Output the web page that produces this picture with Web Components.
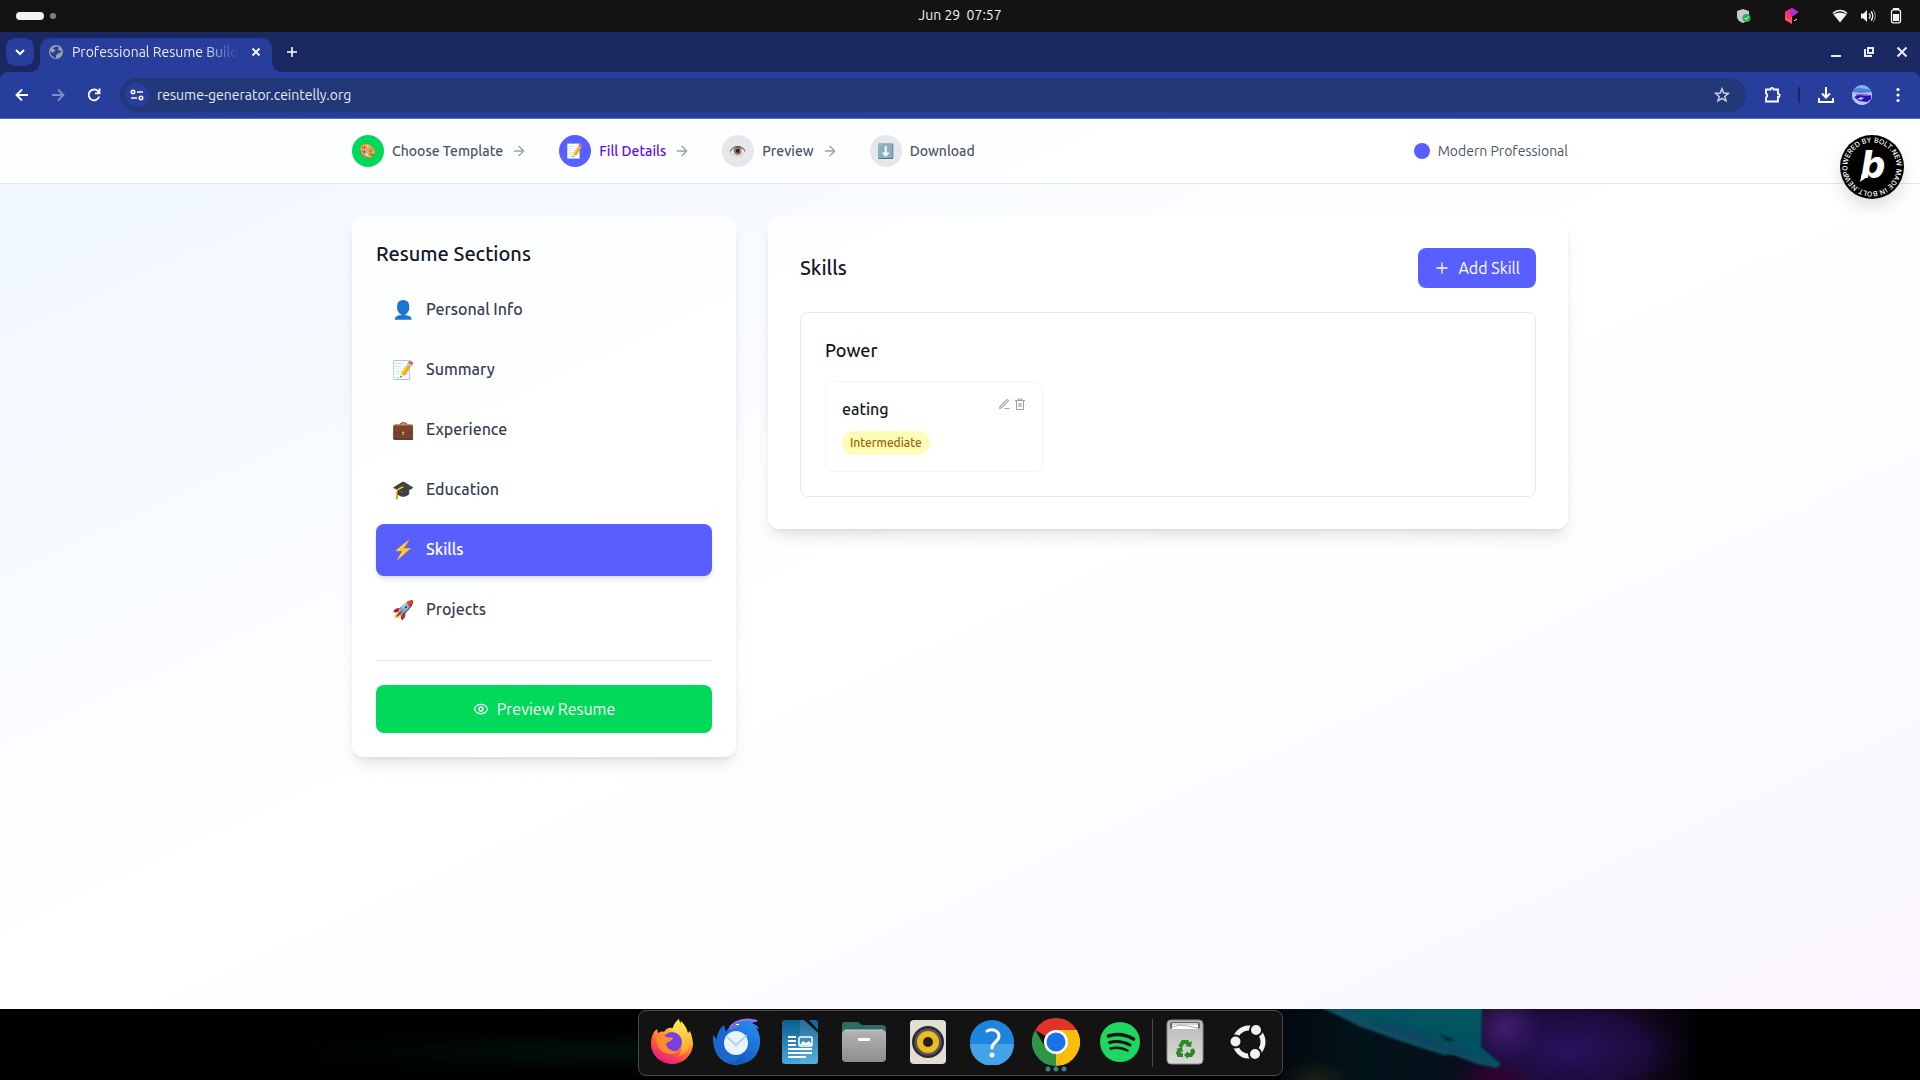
<!DOCTYPE html>
<html lang="en">
  <head>
    <meta charset="utf-8">
    <title>Professional Resume Builder</title>
    <style type="text/css">
      html {
        font-family: Ubuntu, "Noto Sans", "Noto Color Emoji", sans-serif;
        font-size: 16px;
        line-height: 24px;
      }

      body {
        display: flex;
        flex-direction: column;
        margin: 0;
        min-height: 100vh;
        background: #000;
      }

      resume-page {
        flex: 1 1 auto;
      }
    </style>
  </head>
  <body>
    <system-bar></system-bar>
    <browser-tabs></browser-tabs>
    <browser-toolbar></browser-toolbar>

    <resume-page>
      <resume-step slot="steps" class="done" icon="🎨">Choose Template</resume-step>
      <resume-step slot="steps" class="current" icon="📝">Fill Details</resume-step>
      <resume-step slot="steps" icon="👁️">Preview</resume-step>
      <resume-step slot="steps" class="last" icon="⬇️">Download</resume-step>

      <section-list slot="sidebar">
        <section-item icon="👤">Personal Info</section-item>
        <section-item icon="📝">Summary</section-item>
        <section-item icon="💼">Experience</section-item>
        <section-item icon="🎓">Education</section-item>
        <section-item icon="⚡" class="active">Skills</section-item>
        <section-item icon="🚀">Projects</section-item>
      </section-list>

      <skills-panel>
        <skill-group>
          <span slot="title">Power</span>
          <skill-card level="Intermediate">eating</skill-card>
        </skill-group>
      </skills-panel>
    </resume-page>

    <app-dock></app-dock>

    <script>
      class BaseElement extends HTMLElement {
        constructor() {
          super()

          this.attachShadow({ mode: 'open' })
          this.shadowRoot.innerHTML = `
            <style>
              *, :host { box-sizing: border-box; }
              button { border: 0; padding: 0; background: none; color: inherit; font: inherit; }
              h2, h3, h4 { margin: 0; font-weight: 500; }
              svg { display: block; flex: none; }
            </style>
          ` + this.render()
        }

        attr(name) {
          return this.getAttribute(name) || ''
        }
      }

      customElements.define('system-bar', class extends BaseElement {
        render() {
          return `
            <style>
              :host {
                display: grid;
                grid-template-columns: 1fr auto 1fr;
                align-items: center;
                height: 32px;
                padding: 0 16px;
                background: #131313;
                color: #f2f2f2;
                font-size: 14px;
              }
              .spaces { display: flex; align-items: center; gap: 6px; }
              .spaces i { width: 6px; height: 6px; border-radius: 3px; background: #808080; }
              .spaces i:first-child { width: 28px; height: 8px; border-radius: 4px; background: #f2f2f2; }
              .clock { white-space: pre; line-height: 30px; align-self: start; }
              .tray { display: flex; justify-content: flex-end; align-items: center; gap: 12px; }
              .tray .app { margin-right: 20px; }
            </style>
            <div class="spaces"><i></i><i></i></div>
            <time class="clock">Jun 29  07:57</time>
            <div class="tray">
              <svg class="app" width="16" height="16" viewBox="0 0 16 16">
                <path fill="#c8c8c8" d="M7 1l6 2v5c0 4-3 6-6 7-3-1-6-3-6-7V3z"/>
                <circle cx="10.500" cy="10" r="4" fill="#2bb04a"/>
                <path fill="none" stroke="#fff" d="M8.500 10l1.500 1.500 2.500-3"/>
              </svg>
              <svg class="app" width="16" height="16" viewBox="0 0 16 16">
                <path fill="#ff5a3c" d="M1 4l7-4v16l-7-4z"/>
                <path fill="#ff2f7e" d="M1 4l7-4 2 4-5 8-4-4z"/>
                <path fill="#b22be0" d="M8 0l7 4-7 5-3-4z"/>
                <path fill="#000" d="M15 4v8l-7 4V9z"/>
                <path stroke="#fff" d="M10 13l3-2"/>
              </svg>
              <svg width="16" height="16" viewBox="0 0 16 16">
                <path fill="none" stroke="#f2f2f2" stroke-width="1.500" d="M1 5.500C5 1.500 11 1.500 15 5.500"/>
                <path fill="#f2f2f2" d="M1.500 6.500C5 4 11 4 14.500 6.500L8 14.500z"/>
              </svg>
              <svg width="16" height="16" viewBox="0 0 16 16" fill="none" stroke="#f2f2f2">
                <path fill="#f2f2f2" stroke="none" d="M1 5.500h2.500L7 2v12l-3.500-3.500H1z"/>
                <path stroke-width="1.400" d="M9 5.500c1.300 1.300 1.300 3.700 0 5"/>
                <path stroke-width="1.400" d="M11 3.500c2.300 2.300 2.300 6.700 0 9"/>
                <path stroke="#999" d="M13 2c3 3 3 9 0 12"/>
              </svg>
              <svg width="16" height="16" viewBox="0 0 16 16">
                <path fill="#f2f2f2" d="M5 0h6v2H5zM5 6h6v7H5z"/>
                <rect x="3.500" y="1.800" width="9" height="13" rx="2" fill="none" stroke="#f2f2f2" stroke-width="1.300"/>
              </svg>
            </div>
          `
        }
      })

      customElements.define('browser-tabs', class extends BaseElement {
        render() {
          return `
            <style>
              :host {
                display: flex;
                align-items: flex-end;
                height: 40px;
                padding: 0 4px 0 6px;
                background: #1a2962;
                color: #e8ebf7;
                font-size: 14px;
              }
              button { display: grid; place-items: center; width: 28px; height: 28px; }
              .search { align-self: center; border-radius: 9px; background: #283e9c; margin-right: 6px; }
              .tab {
                position: relative;
                display: flex;
                align-items: center;
                width: 232px;
                height: 34px;
                padding: 0 2px 6px 8px;
                border-radius: 10px 10px 0 0;
                background: #283e9c;
              }
              /* flared feet that join the tab to the toolbar */
              .tab::before, .tab::after {
                content: "";
                position: absolute;
                bottom: 0;
                width: 10px;
                height: 10px;
              }
              .tab::before { right: 100%; background: radial-gradient(circle at 0 0, transparent 10px, #283e9c 10px); }
              .tab::after { left: 100%; background: radial-gradient(circle at 100% 0, transparent 10px, #283e9c 10px); }
              .title {
                flex: 1;
                margin-left: 8px;
                overflow: hidden;
                white-space: nowrap;
                -webkit-mask: linear-gradient(to right, #000 132px, transparent 166px);
                mask: linear-gradient(to right, #000 132px, transparent 166px);
              }
              .new, .window { margin-bottom: 6px; }
              .new { margin-left: 6px; }
              .window { display: flex; gap: 5px; margin-left: auto; }
            </style>
            <button class="search" aria-label="Search tabs">
              <svg width="12" height="12" viewBox="0 0 12 12" fill="none" stroke="#fff" stroke-width="2"><path d="M2 4l4 4 4-4"/></svg>
            </button>
            <div class="tab">
              <svg width="16" height="16" viewBox="0 0 16 16">
                <circle cx="8" cy="8" r="7" fill="#9aa0a6"/>
                <path fill="#283e9c" d="M8 2.500c-1 1-3 .5-3 2.500 2 0 3 1 2 2-1 .5-2 1-2 2L2 7c0 4 3 6.500 6 7v-3c2 0 1-2 3-2 1 0 2-1 2.500-2-2 0-2-1-4-1 0-1 2-1 1-3z"/>
              </svg>
              <span class="title">Professional Resume Builder</span>
              <button aria-label="Close tab">
                <svg width="10" height="10" viewBox="0 0 10 10" stroke="#fff" stroke-width="1.800"><path d="M1.500 1.500l7 7M8.500 1.500l-7 7"/></svg>
              </button>
            </div>
            <button class="new" aria-label="New tab">
              <svg width="12" height="12" viewBox="0 0 12 12" stroke="#fff" stroke-width="1.600"><path d="M6 1v10M1 6h10"/></svg>
            </button>
            <div class="window">
              <button aria-label="Minimise">
                <svg width="12" height="12" viewBox="0 0 12 12" fill="#e8ebf7"><path d="M1 9h10v2H1z"/></svg>
              </button>
              <button aria-label="Restore">
                <svg width="12" height="12" viewBox="0 0 12 12" fill="none" stroke="#e8ebf7" stroke-width="2"><path d="M5 2h5v5H5zM2 3v7h7"/></svg>
              </button>
              <button aria-label="Close">
                <svg width="12" height="12" viewBox="0 0 12 12" stroke="#e8ebf7" stroke-width="2"><path d="M1.500 1.500l9 9M10.500 1.500l-9 9"/></svg>
              </button>
            </div>
          `
        }
      })

      customElements.define('browser-toolbar', class extends BaseElement {
        render() {
          return `
            <style>
              :host {
                display: block;
                background: #1a2962;
                font-size: 14px;
              }
              .bar {
                display: flex;
                align-items: center;
                height: 47px;
                padding: 0 8px;
                border-bottom: 1px solid #5272c4;
                border-radius: 8px 8px 0 0;
                background: #283e9c;
              }
              button { display: grid; place-items: center; width: 28px; height: 28px; }
              .nav { display: flex; gap: 8px; margin-right: 12px; }
              .address {
                flex: 1;
                display: flex;
                align-items: center;
                height: 34px;
                padding: 0 10px 0 5px;
                border-radius: 17px;
                background: #223878;
              }
              .site { width: 24px; height: 24px; border-radius: 12px; background: #283e9c; }
              input {
                flex: 1;
                margin: 0 8px;
                padding: 0;
                border: 0;
                outline: 0;
                background: none;
                color: #e8ebf7;
                font: inherit;
              }
              .ext { margin: 0 11px 0 13px; }
              .sep { width: 2px; height: 16px; margin-right: 12px; background: #1a2962; }
              .menu { margin-left: 8px; }
              .user { margin-left: 8px; }
            </style>
            <div class="bar">
              <div class="nav">
                <button aria-label="Back"><svg width="14" height="14" viewBox="0 0 14 14" fill="none" stroke="#fff" stroke-width="1.800"><path d="M13 7H2M7 1.500L1.500 7 7 12.500"/></svg></button>
                <button aria-label="Forward"><svg width="14" height="14" viewBox="0 0 14 14" fill="none" stroke="#7f8fca" stroke-width="1.800"><path d="M1 7h11M7 1.500L12.500 7 7 12.500"/></svg></button>
                <button aria-label="Reload"><svg width="14" height="14" viewBox="0 0 14 14" fill="none" stroke="#fff" stroke-width="1.800"><path d="M12.200 8.500A5.400 5.400 0 1 1 11 3.200L12.500 5M12.500 .5V5.300H8"/></svg></button>
              </div>
              <div class="address">
                <button class="site" aria-label="Site information">
                  <svg width="14" height="14" viewBox="0 0 14 14" fill="none" stroke="#fff" stroke-width="1.600"><circle cx="3" cy="4" r="1.700"/><path d="M7 4h6M1 10h6"/><circle cx="11" cy="10" r="1.700"/></svg>
                </button>
                <input type="text" aria-label="Address" value="resume-generator.ceintelly.org">
                <button aria-label="Bookmark">
                  <svg width="16" height="16" viewBox="0 0 16 16" fill="none" stroke="#c9cfe0" stroke-width="1.500"><path d="M8 1.800l1.700 4.300 4.700.3-3.600 3 1.200 4.500L8 11.400l-4 2.500 1.200-4.500-3.600-3 4.700-.3z"/></svg>
                </button>
              </div>
              <button class="ext" aria-label="Extensions">
                <svg width="18" height="18" viewBox="0 0 18 18" fill="none" stroke="#fff" stroke-width="1.800"><path d="M2 3.500h4.500a1.600 1.600 0 0 1 3.200 0H14v4.300a1.600 1.600 0 0 1 0 3.200v4.500H2v-4a2.200 2.200 0 0 0 0-4z"/></svg>
              </button>
              <span class="sep"></span>
              <button aria-label="Downloads">
                <svg width="18" height="18" viewBox="0 0 18 18" fill="none" stroke="#fff" stroke-width="2"><path d="M9 1v10M5 7.500l4 4 4-4M2 12v4h14v-4"/></svg>
              </button>
              <button class="user" aria-label="Profile">
                <svg width="20" height="20" viewBox="0 0 20 20">
                  <clipPath id="round"><circle cx="10" cy="10" r="10"/></clipPath>
                  <g clip-path="url(#round)">
                    <path fill="#7db8f0" d="M0 0h20v20H0z"/>
                    <path fill="#4f7ee0" d="M0 4l8-1 12 2v3H0z"/>
                    <path fill="#c8b8f0" d="M0 7l9 1 11-1v4H0z"/>
                    <path fill="#b9c4f4" d="M0 10h20v10H0z"/>
                    <path fill="#7f6fe0" d="M4 9h12v2H4z"/>
                    <path fill="#2b12b8" d="M2 12l5-2 7 1 5-1v4l-4 3-8-1z"/>
                    <path fill="#b9c4f4" d="M5 14l4-2 3 1-3 2z"/>
                  </g>
                </svg>
              </button>
              <button class="menu" aria-label="Menu">
                <svg width="4" height="16" viewBox="0 0 4 16" fill="#fff"><circle cx="2" cy="2.500" r="1.600"/><circle cx="2" cy="8" r="1.600"/><circle cx="2" cy="13.500" r="1.600"/></svg>
              </button>
            </div>
          `
        }
      })

      customElements.define('resume-page', class extends BaseElement {
        render() {
          return `
            <style>
              :host {
                position: relative;
                display: block;
                background: linear-gradient(to bottom right, #eff6ff, #fff, #faf5ff);
              }
              header {
                background: rgba(255, 255, 255, .8);
                border-bottom: 1px solid #e5e7eb;
              }
              .wrap {
                max-width: 1280px;
                margin: 0 auto;
                padding: 0 32px;
              }
              header .wrap {
                display: flex;
                align-items: center;
                justify-content: space-between;
                height: 64px;
              }
              nav { display: flex; gap: 32px; }
              .template {
                display: flex;
                align-items: center;
                gap: 8px;
                color: #4a5565;
                font-size: 14px;
                line-height: 20px;
              }
              .template i { width: 16px; height: 16px; border-radius: 8px; background: #595fff; }
              .columns {
                display: grid;
                grid-template-columns: repeat(3, 1fr);
                gap: 32px;
                align-items: start;
                padding-top: 32px;
                padding-bottom: 32px;
              }
              .content { grid-column: span 2; }
              bolt-badge { position: absolute; top: 16px; right: 16px; }
            </style>
            <header>
              <div class="wrap">
                <nav><slot name="steps"></slot></nav>
                <div class="template"><i></i>Modern Professional</div>
              </div>
            </header>
            <div class="wrap columns">
              <slot name="sidebar"></slot>
              <div class="content"><slot></slot></div>
            </div>
            <bolt-badge></bolt-badge>
          `
        }
      })

      customElements.define('resume-step', class extends BaseElement {
        render() {
          return `
            <style>
              :host {
                display: flex;
                align-items: center;
                gap: 8px;
                color: #4a5565;
                font-size: 14px;
                font-weight: 500;
                line-height: 20px;
              }
              :host(.current) { color: #5a0df5; }
              .dot {
                display: grid;
                place-items: center;
                width: 32px;
                height: 32px;
                border-radius: 16px;
                background: #e5e7eb;
              }
              :host(.done) .dot { background: #00d95a; }
              :host(.current) .dot { background: #595fff; }
              :host(.last) svg { display: none; }
            </style>
            <span class="dot">${this.attr('icon')}</span>
            <slot></slot>
            <svg width="16" height="16" viewBox="0 0 24 24" fill="none" stroke="#99a1af" stroke-width="2" stroke-linecap="round" stroke-linejoin="round"><path d="M5 12h14M12 5l7 7-7 7"/></svg>
          `
        }
      })

      customElements.define('section-list', class extends BaseElement {
        render() {
          return `
            <style>
              :host {
                display: block;
                padding: 24px;
                border-radius: 12px;
                background: rgba(255, 255, 255, .8);
                box-shadow: 0 10px 15px -3px rgba(0, 0, 0, .1), 0 4px 6px -4px rgba(0, 0, 0, .1);
              }
              h2 { margin-bottom: 16px; color: #101828; font-size: 20px; font-weight: 550; line-height: 28px; }
              nav { display: grid; gap: 8px; }
              footer { margin-top: 24px; padding-top: 24px; border-top: 1px solid #e5e7eb; }
              button {
                display: flex;
                align-items: center;
                justify-content: center;
                gap: 8px;
                width: 100%;
                height: 48px;
                border-radius: 8px;
                background: #00d95a;
                color: #fff;
              }
            </style>
            <h2>Resume Sections</h2>
            <nav><slot></slot></nav>
            <footer>
              <button>
                <svg width="16" height="16" viewBox="0 0 16 16" fill="none" stroke="#fff" stroke-width="1.300"><path d="M1.300 8c2.500-6.300 10.900-6.300 13.400 0-2.500 6.300-10.900 6.300-13.400 0z"/><circle cx="8" cy="8" r="2"/></svg>
                Preview Resume
              </button>
            </footer>
          `
        }
      })

      customElements.define('section-item', class extends BaseElement {
        render() {
          return `
            <style>
              :host { display: block; color: #364153; }
              button {
                display: flex;
                align-items: center;
                gap: 12px;
                width: 100%;
                padding: 11px 16px 13px;
                border-radius: 8px;
                text-align: left;
                font-weight: 500;
                line-height: 28px;
              }
              :host(.active) button {
                background: #595fff;
                color: #fff;
                box-shadow: 0 4px 6px -1px rgba(0, 0, 0, .1), 0 2px 4px -2px rgba(0, 0, 0, .1);
              }
              .icon { width: 22px; font-size: 18px; }
            </style>
            <button><span class="icon">${this.attr('icon')}</span><slot></slot></button>
          `
        }
      })

      customElements.define('skills-panel', class extends BaseElement {
        render() {
          return `
            <style>
              :host {
                display: block;
                padding: 32px;
                border-radius: 12px;
                background: rgba(255, 255, 255, .8);
                box-shadow: 0 10px 15px -3px rgba(0, 0, 0, .1), 0 4px 6px -4px rgba(0, 0, 0, .1);
              }
              header {
                display: flex;
                align-items: center;
                justify-content: space-between;
                margin-bottom: 24px;
              }
              h2 { color: #101828; font-size: 20px; font-weight: 550; line-height: 28px; }
              button {
                display: flex;
                align-items: center;
                gap: 8px;
                height: 40px;
                padding: 0 16px;
                border-radius: 8px;
                background: #595fff;
                color: #fff;
              }
            </style>
            <header>
              <h2>Skills</h2>
              <button>
                <svg width="16" height="16" viewBox="0 0 16 16" stroke="#fff" stroke-width="1.300"><path d="M8 2.500v11M2.500 8h11"/></svg>
                Add Skill
              </button>
            </header>
            <slot></slot>
          `
        }
      })

      customElements.define('skill-group', class extends BaseElement {
        render() {
          return `
            <style>
              :host {
                display: block;
                padding: 24px;
                border: 1px solid #e5e7eb;
                border-radius: 8px;
                background: #fff;
              }
              h3 { margin-bottom: 18px; color: #101828; font-size: 18px; font-weight: 550; line-height: 26px; }
              .cards { display: grid; grid-template-columns: repeat(3, 1fr); gap: 16px; }
            </style>
            <h3><slot name="title"></slot></h3>
            <div class="cards"><slot></slot></div>
          `
        }
      })

      customElements.define('skill-card', class extends BaseElement {
        render() {
          return `
            <style>
              :host {
                display: flex;
                justify-content: space-between;
                align-items: flex-start;
                padding: 16px;
                border: 1px solid #f3f4f6;
                border-radius: 8px;
              }
              h4 { margin-bottom: 11px; color: #101828; font-size: 16px; line-height: 22px; }
              .level {
                display: block;
                width: fit-content;
                padding: 4px 8px;
                border-radius: 12px;
                background: #fbfdb8;
                color: #a65f00;
                font-size: 12px;
                font-weight: 500;
                line-height: 16px;
              }
              .actions { display: flex; gap: 4px; color: #99a1af; }
            </style>
            <div>
              <h4><slot></slot></h4>
              <span class="level">${this.attr('level')}</span>
            </div>
            <div class="actions">
              <button aria-label="Edit">
                <svg width="12" height="12" viewBox="0 0 12 12" fill="none" stroke="currentColor"><path fill="#d4d7dd" d="M1.500 10.500l.7-2.500L8.500 1.700q1-.7 1.700 0t0 1.700L4 9.800z"/><path d="M6.500 10.500h5"/></svg>
              </button>
              <button aria-label="Delete">
                <svg width="12" height="12" viewBox="0 0 12 12" fill="none" stroke="currentColor"><path fill="#c3c7cf" stroke="none" d="M4 5h4v4H4z"/><path d="M1 2.500h10M4 2.500v-1.500h4v1.500M2.500 2.500v9h7v-9"/></svg>
              </button>
            </div>
          `
        }
      })

      customElements.define('bolt-badge', class extends BaseElement {
        render() {
          return `
            <style>
              :host {
                display: block;
                border-radius: 32px;
                box-shadow: 0 8px 16px rgba(0, 0, 0, .12);
              }
              text { fill: #fff; font-family: Inter, "Liberation Sans", sans-serif; }
              .ring { font-size: 7px; font-weight: 500; }
              .mark { font-size: 38px; font-weight: 800; font-style: italic; }
            </style>
            <a href="#" aria-label="Made in Bolt">
              <svg width="64" height="64" viewBox="0 0 64 64">
                <circle cx="32" cy="32" r="32" fill="#000"/>
                <path id="ring" fill="none" d="M8.800 40A24.500 24.500 0 1 1 55.200 24 24.500 24.500 0 1 1 8.800 40"/>
                <text class="ring"><textPath href="#ring">POWERED BY BOLT.NEW MADE IN BOLT.NEW</textPath></text>
                <text class="mark" x="33" y="43" text-anchor="middle">b</text>
                <path fill="#fff" d="M22 38l-2 9 7-5z"/>
              </svg>
            </a>
          `
        }
      })

      customElements.define('dock-app', class extends BaseElement {
        render() {
          return `
            <style>
              :host { display: block; }
              button { position: relative; display: grid; place-items: center; width: 64px; height: 64px; padding-bottom: 2px; }
              i { display: none; }
              :host(.running) i {
                position: absolute;
                bottom: 3px;
                left: 20px;
                display: block;
                width: 24px;
                height: 6px;
                background: radial-gradient(circle at 4px 3px, #348585 2px, transparent 3px) 0 0 / 8px 6px;
              }
            </style>
            <button aria-label="${this.attr('label')}"><slot></slot><i></i></button>
          `
        }
      })

      customElements.define('app-dock', class extends BaseElement {
        render() {
          return `
            <style>
              :host {
                position: relative;
                display: flex;
                justify-content: center;
                height: 71px;
                overflow: hidden;
                background: #000;
              }
              .wallpaper { position: absolute; right: 0; top: 0; }
              .glow { position: absolute; left: 0; top: 0; width: 50%; height: 100%; background: radial-gradient(ellipse at 65% 60%, #00100c, transparent 40%); }
              .dock {
                position: relative;
                display: flex;
                align-items: center;
                height: 66px;
                margin-top: 1px;
                padding: 0 1px;
                border: 1px solid #4a4a4a;
                border-radius: 8px;
                background: #131313;
              }
              .sep { width: 1px; height: 48px; background: #4a4a4a; }
            </style>
            <div class="glow"></div>
            <svg class="wallpaper" width="640" height="71" viewBox="0 0 640 71">
              <defs>
                <radialGradient id="violet"><stop offset="0" stop-color="#2a1260"/><stop offset=".6" stop-color="#1c0c44" stop-opacity=".8"/><stop offset="1" stop-color="#0a0418" stop-opacity="0"/></radialGradient>
                <radialGradient id="plum"><stop offset="0" stop-color="#421c70"/><stop offset="1" stop-color="#421c70" stop-opacity="0"/></radialGradient>
                <radialGradient id="wine"><stop offset="0" stop-color="#360030"/><stop offset="1" stop-color="#360030" stop-opacity="0"/></radialGradient>
                <radialGradient id="moss"><stop offset="0" stop-color="#1a2218"/><stop offset="1" stop-color="#1a2218" stop-opacity="0"/></radialGradient>
                <linearGradient id="base" x1="0" x2="1"><stop offset="0" stop-color="#05070f"/><stop offset=".12" stop-color="#02131a"/><stop offset=".3" stop-color="#07101a"/><stop offset=".34" stop-color="#1c0c2c"/><stop offset=".55" stop-color="#160818"/><stop offset=".65" stop-color="#010104"/><stop offset="1" stop-color="#000"/></linearGradient>
                <linearGradient id="teal" x1="0" x2="1" y1="1" y2="0"><stop offset="0" stop-color="#0a4560"/><stop offset="1" stop-color="#045a62"/></linearGradient>
                <filter id="edge"><feGaussianBlur stdDeviation="1"/></filter>
              </defs>
              <path fill="url(#base)" d="M0 0h640v71H0z"/>
              <ellipse cx="290" cy="40" rx="130" ry="60" fill="url(#violet)"/>
              <ellipse cx="225" cy="18" rx="38" ry="34" fill="url(#plum)"/>
              <ellipse cx="215" cy="74" rx="44" ry="26" fill="url(#wine)"/>
              <ellipse cx="36" cy="71" rx="36" ry="20" fill="url(#moss)"/>
              <g filter="url(#edge)">
                <path fill="url(#teal)" d="M36-4h166l-1 42 20 17-4 4-20-4-24-9-10 0-46-15-38-14z"/>
                <path fill="#0a3c66" opacity=".6" d="M84 12l40 6 44 20 40 12-40-8-46-16z"/>
                <path fill="#02282e" d="M158 24l18 7-8 2z"/>
              </g>
            </svg>
            <div class="dock">
              <dock-app label="Firefox">
                <svg width="44" height="46" viewBox="0 0 44 46">
                  <defs>
                    <linearGradient id="fx" x1=".8" y1="0" x2=".3" y2="1"><stop offset="0" stop-color="#fff04a"/><stop offset=".35" stop-color="#ffb52e"/><stop offset=".65" stop-color="#ff5a3c"/><stop offset="1" stop-color="#e5158a"/></linearGradient>
                    <linearGradient id="fy" x1="0" y1="0" x2="0" y2="1"><stop offset="0" stop-color="#fff14f"/><stop offset="1" stop-color="#ff9a2e"/></linearGradient>
                  </defs>
                  <path fill="url(#fx)" d="M1 25C1 17 4 12 7 10l1 4c2-1 4-2 6-1 3-5 10-6 13 0l4-11c4 4 6 8 7 12l2-2c2 5 3 10 3 14-1 11-10 19-21 19S1 36 1 25z"/>
                  <path fill="url(#fy)" d="M22 12c1-6 4-10 7-12 1 7 6 10 9 15 5 10-1 20-10 23 6-7 4-18-6-26z"/>
                  <circle cx="22" cy="23" r="10" fill="#7a3fe0"/>
                  <path fill="#ff8a30" d="M6 18c4-2 8-2 11 0 2 1 5 0 6 1-1 3-6 4-7 6 1 5 6 8 13 7-8 6-22 4-23-14z"/>
                </svg>
              </dock-app>
              <dock-app label="Thunderbird">
                <svg width="48" height="48" viewBox="0 0 48 48">
                  <defs><linearGradient id="tb" x1=".8" y1="0" x2=".3" y2="1"><stop offset="0" stop-color="#2a8df0"/><stop offset="1" stop-color="#1058c0"/></linearGradient></defs>
                  <path fill="#1a68cc" d="M1 17l4 4c0-6 3-11 7-14l2 7 14 24-1 9C11 48 0 37 1 17z"/>
                  <path fill="url(#tb)" d="M14 14C19 3 34-1 46 3l-6 2c4 2 7 4 7 6l-3-1c6 8 5 20 0 27-6 9-20 12-29 7 8 1 12-2 12-6z"/>
                  <path fill="none" stroke="#a070e0" stroke-width="2" d="M18 9C25 1 36 0 45 3"/>
                  <path fill="#7070d8" d="M17 12c1-3 4-7 8-8l2 4z"/>
                  <circle cx="24" cy="25" r="12" fill="#e9f4fd"/>
                  <path fill="none" stroke="#a9c5e5" stroke-width="1.500" d="M14 18l10 9 11-10"/>
                  <path fill="#fff" d="M24 6h3v1h-3z"/>
                </svg>
              </dock-app>
              <dock-app label="Writer">
                <svg width="38" height="46" viewBox="0 0 38 46">
                  <defs><linearGradient id="wr" x1="0" y1="0" x2="0" y2="1"><stop offset="0" stop-color="#0b5d8e"/><stop offset="1" stop-color="#46a9dc"/></linearGradient></defs>
                  <path fill="url(#wr)" d="M4 1h19l14 13v28q0 3-3 3H4q-3 0-3-3V4q0-3 3-3z"/>
                  <path fill="#fff" opacity=".1" d="M19 1h4l14 13v31H19z"/>
                  <path fill="#136a9e" d="M28 1h6q3 0 3 3v7z"/>
                  <path stroke="#fff" stroke-width="2" d="M7 18h8M7 22h8M7 26h8M7 30h24M7 34h24M7 38h18"/>
                  <rect x="18" y="18" width="13" height="9" rx="1" fill="none" stroke="#fff" stroke-width="1.500"/>
                  <path fill="#fff" d="M19 26l3-4 3 2 3-2 3 4z"/>
                </svg>
              </dock-app>
              <dock-app label="Files">
                <svg width="46" height="42" viewBox="0 0 46 42">
                  <defs><linearGradient id="fo" x1="0" y1="0" x2="0" y2="1"><stop offset="0" stop-color="#b4b4b4"/><stop offset="1" stop-color="#8d8d8d"/></linearGradient></defs>
                  <path fill="#2c6b66" d="M4 1h13l4 3h20q4 0 4 4v12H1V4q0-3 3-3z"/>
                  <rect x="1" y="9" width="44" height="32" rx="4" fill="url(#fo)"/>
                  <path fill="none" stroke="#d0d0d0" d="M4 9h38"/>
                  <rect x="17" y="17" width="12" height="3" rx="1" fill="#fff"/>
                </svg>
              </dock-app>
              <dock-app label="Rhythmbox">
                <svg width="38" height="46" viewBox="0 0 38 46">
                  <rect x="1" y="1" width="36" height="44" rx="4" fill="#e4ded2"/>
                  <circle cx="19" cy="23" r="16" fill="#2a2a34"/>
                  <circle cx="19" cy="23" r="13.500" fill="#555562"/>
                  <circle cx="19" cy="23" r="11" fill="#efba1c"/>
                  <circle cx="19" cy="23" r="5" fill="#222"/>
                </svg>
              </dock-app>
              <dock-app label="Help">
                <svg width="46" height="46" viewBox="0 0 46 46">
                  <circle cx="23" cy="23" r="22" fill="#1f85dc"/>
                  <path fill="#46a2e8" d="M1 25h44a22 22 0 0 1-44 0z"/>
                  <path fill="none" stroke="#fff" stroke-width="3" stroke-linecap="round" d="M18 12c6-3 12 0 12 5 0 6-7 6-7 12"/>
                  <circle cx="23" cy="36" r="2.500" fill="#fff"/>
                </svg>
              </dock-app>
              <dock-app label="Chrome" class="running">
                <svg width="48" height="48" viewBox="0 0 48 48">
                  <path fill="#e0342b" d="M24 24L3.200 12a24 24 0 0 1 41.600 0z"/>
                  <path fill="#fbbc0b" d="M24 24V12h20.800A24 24 0 0 1 24 48z"/>
                  <path fill="#2f9646" d="M24 48A24 24 0 0 1 3.200 12L13.600 30 34.400 30z"/>
                  <path fill="#fbbc0b" d="M24 48l10.400-18H24z"/>
                  <circle cx="24" cy="24" r="12" fill="#fff"/>
                  <circle cx="24" cy="24" r="9.500" fill="#1a73e8"/>
                </svg>
              </dock-app>
              <dock-app label="Spotify">
                <svg width="40" height="40" viewBox="0 0 40 40" fill="none" stroke="#131313" stroke-linecap="round">
                  <circle cx="20" cy="20" r="20" fill="#1ed760" stroke="none"/>
                  <path stroke-width="3.600" d="M8.500 14c8-2.500 17-1.500 25 3"/>
                  <path stroke-width="3" d="M9.500 20.500c7-2 14-1 20.500 2.500"/>
                  <path stroke-width="2.500" d="M10.500 26.500c6-1.500 12-1 17 2"/>
                </svg>
              </dock-app>
              <span class="sep"></span>
              <dock-app label="Trash">
                <svg width="38" height="46" viewBox="0 0 38 46">
                  <defs><linearGradient id="tr" x1="0" y1="0" x2="0" y2="1"><stop offset="0" stop-color="#b9b9b9"/><stop offset="1" stop-color="#dadada"/></linearGradient></defs>
                  <rect x="1" y="1" width="36" height="44" rx="4" fill="url(#tr)" stroke="#8a8a8a"/>
                  <rect x="4" y="3" width="30" height="7" rx="2" fill="#666"/>
                  <path fill="#fff" d="M6 4h26v6H6z"/>
                  <path fill="none" stroke="#aaa" d="M6 8l8-2 8 1 10 2M6 5h26"/>
                  <!-- three arrows chasing round the triangle -->
                  <g fill="none" stroke="#2a8a22" stroke-width="4">
                    <path d="M14 28l3-5h4l2 3"/>
                    <path d="M26 30l1 3-2 3h-4"/>
                    <path d="M17 36h-4l-1-2 2-3"/>
                  </g>
                  <path fill="#2a8a22" d="M19 27l6 1 1-6zM22 32v8l-4-4zM10 30l6-2 1 5z"/>
                </svg>
              </dock-app>
              <dock-app label="Show applications">
                <svg width="38" height="38" viewBox="0 0 38 38">
                  <circle cx="19" cy="19" r="14" fill="none" stroke="#f2f2f2" stroke-width="5"/>
                  <g fill="#f2f2f2" stroke="#131313" stroke-width="2"><circle cx="5.500" cy="18.500" r="6"/><circle cx="26" cy="7" r="6"/><circle cx="25" cy="31" r="6"/></g>
                </svg>
              </dock-app>
            </div>
          `
        }
      })
    </script>
  </body>
</html>
